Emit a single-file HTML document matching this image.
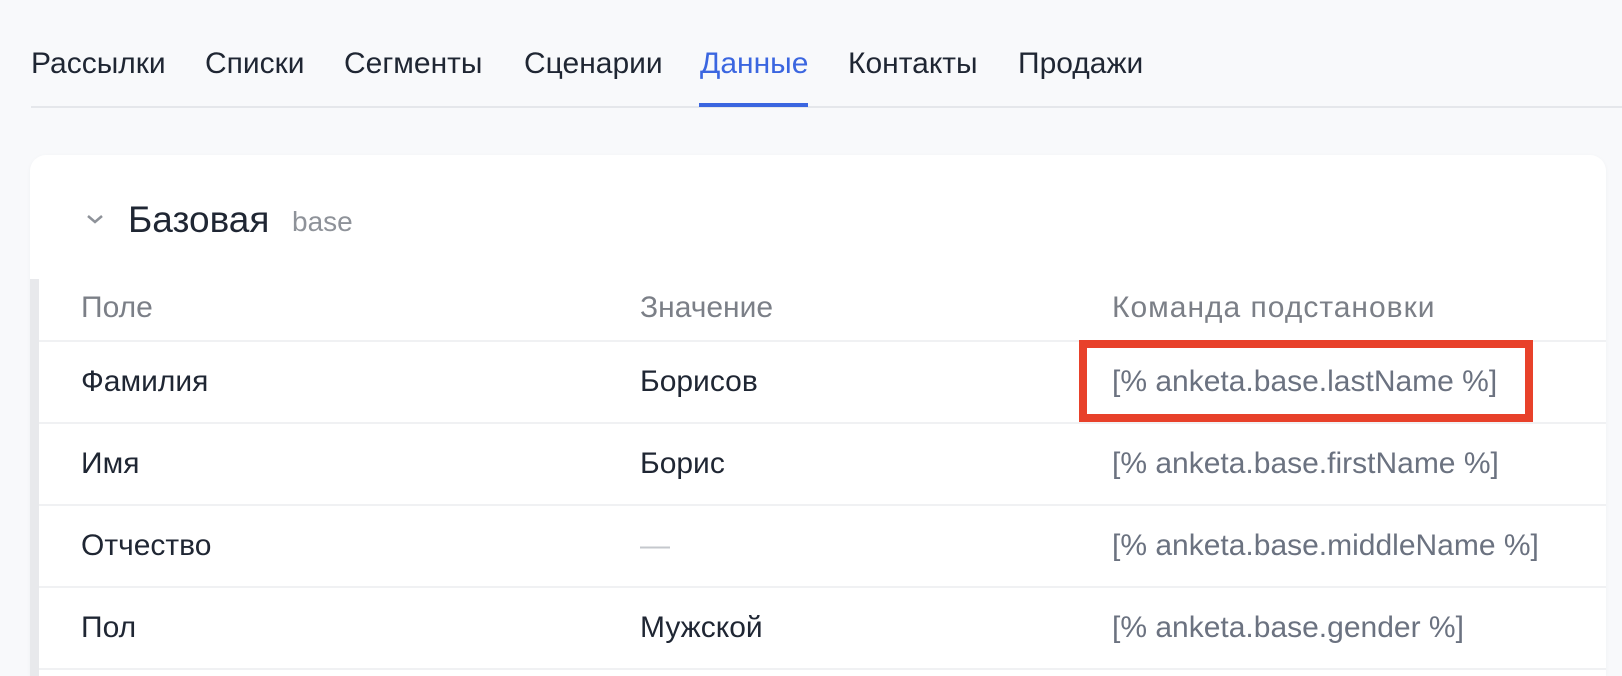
<!DOCTYPE html>
<html><head><meta charset="utf-8"><style>
html,body{margin:0;width:1622px;height:676px;overflow:hidden}
body{background:#f8f9fb;font-family:"Liberation Sans",sans-serif;position:relative}
.tabs{position:absolute;left:31px;top:0;width:1591px;height:106px;border-bottom:2px solid #e5e7eb}
.tab{position:absolute;top:46px;font-size:30px;color:#1f2633;line-height:36px}
.tab.act{color:#3b66e0}
.ul{position:absolute;left:699px;top:103px;width:109px;height:4px;background:#3b66e0}
.card{position:absolute;left:30px;top:155px;width:1576px;height:521px;background:#fff;border-radius:16px 16px 0 0;box-shadow:0 1px 4px rgba(0,0,0,.04)}
.band{position:absolute;left:30px;top:279px;width:9px;height:397px;background:#e8e9ec}
.h{position:absolute;left:128px;top:198px;font-size:37px;color:#1f2633;line-height:44px}
.sub{position:absolute;left:292px;top:205px;font-size:28px;color:#8e9299;line-height:34px}
.t{position:absolute;font-size:30px;line-height:34px;color:#1f2633}
.g{color:#7b7f87}.c{color:#6b7280}
.line{position:absolute;left:39px;width:1567px;height:2px;background:#f0f1f3}
.red{position:absolute;left:1079px;top:340px;width:438px;height:66px;border:8px solid #e8412a}
</style></head><body>
<div class="tabs"></div>
<div class="tab" style="left:31px">Рассылки</div>
<div class="tab" style="left:205px">Списки</div>
<div class="tab" style="left:344px">Сегменты</div>
<div class="tab" style="left:524px">Сценарии</div>
<div class="tab act" style="left:700px">Данные</div>
<div class="tab" style="left:848px">Контакты</div>
<div class="tab" style="left:1018px">Продажи</div>
<div class="ul"></div>
<div class="card"></div>
<div class="band"></div>
<svg style="position:absolute;left:84px;top:211px" width="22" height="16"><path d="M4 5l7 6 7-6" fill="none" stroke="#8e9299" stroke-width="2.5"/></svg>
<div class="h">Базовая</div><div class="sub">base</div>
<div class="t g" style="left:81px;top:291px">Поле</div>
<div class="t g" style="left:640px;top:291px">Значение</div>
<div class="t g" style="left:1112px;top:291px;letter-spacing:1px">Команда подстановки</div>
<div class="line" style="top:340px"></div>
<div class="t" style="left:81px;top:365px">Фамилия</div>
<div class="t" style="left:640px;top:365px">Борисов</div>
<div class="t c" style="left:1112px;top:365px">[% anketa.base.lastName %]</div>
<div class="line" style="top:422px"></div>
<div class="t" style="left:81px;top:447px">Имя</div>
<div class="t" style="left:640px;top:447px">Борис</div>
<div class="t c" style="left:1112px;top:447px">[% anketa.base.firstName %]</div>
<div class="line" style="top:504px"></div>
<div class="t" style="left:81px;top:529px">Отчество</div>
<div class="t" style="left:640px;top:529px;color:#c5c8cd">—</div>
<div class="t c" style="left:1112px;top:529px">[% anketa.base.middleName %]</div>
<div class="line" style="top:586px"></div>
<div class="t" style="left:81px;top:611px">Пол</div>
<div class="t" style="left:640px;top:611px">Мужской</div>
<div class="t c" style="left:1112px;top:611px">[% anketa.base.gender %]</div>
<div class="line" style="top:668px"></div>
<div class="red"></div>
</body></html>
